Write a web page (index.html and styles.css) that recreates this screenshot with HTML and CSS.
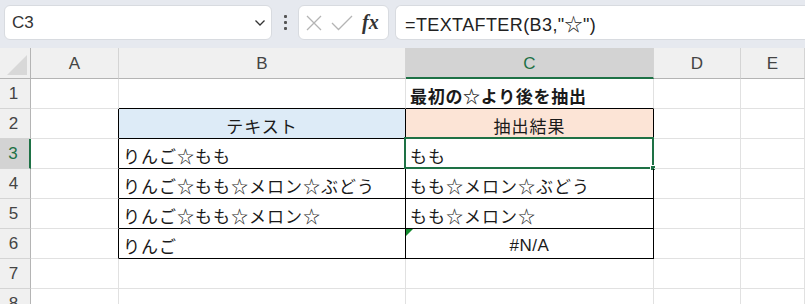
FILE: index.html
```html
<!DOCTYPE html>
<html lang="ja">
<head>
  <meta charset="UTF-8">
  <title>TEXTAFTER</title>
  <link rel="stylesheet" href="styles.css">
</head>
<body>
  <div class="toolbar">
    <div class="name-box">
      <span class="name-text">C3</span>
      <svg class="chevron" width="12" height="8" viewBox="0 0 12 8"><polyline points="1.5,1.5 6,6 10.5,1.5" fill="none" stroke="#333" stroke-width="1.3"/></svg>
    </div>
    <div class="more-dots"><i></i><i></i><i></i></div>
    <div class="fx-box">
      <svg width="18" height="18" viewBox="0 0 18 18"><path d="M2 2 L16 16 M16 2 L2 16" stroke="#b4b4b4" stroke-width="1.3" fill="none"/></svg>
      <svg width="22" height="16" viewBox="0 0 22 16"><polyline points="1,8 7.5,14.5 21,1" stroke="#b4b4b4" stroke-width="1.3" fill="none"/></svg>
      <span class="fx">fx</span>
    </div>
    <div class="formula-box">=TEXTAFTER(B3,"☆")</div>
  </div>

  <div class="sheet">
    <!-- 列見出し -->
    <div class="corner"><span class="corner-tri"></span></div>
    <div class="col-head">A</div>
    <div class="col-head">B</div>
    <div class="col-head sel">C</div>
    <div class="col-head">D</div>
    <div class="col-head">E</div>

    <!-- 1 -->
    <div class="row-head">1</div>
    <div class="cell"></div>
    <div class="cell tb-top"></div>
    <div class="cell tb-top title">最初の☆より後を抽出</div>
    <div class="cell"></div>
    <div class="cell"></div>

    <!-- 2 -->
    <div class="row-head">2</div>
    <div class="cell tb-left"></div>
    <div class="cell tb head-blue">テキスト</div>
    <div class="cell tb head-orange">抽出結果</div>
    <div class="cell"></div>
    <div class="cell"></div>

    <!-- 3 -->
    <div class="row-head sel">3</div>
    <div class="cell tb-left"></div>
    <div class="cell tb">りんご☆もも</div>
    <div class="cell tb active">もも<span class="sel-frame"><span class="fill-handle"></span></span></div>
    <div class="cell"></div>
    <div class="cell"></div>

    <!-- 4 -->
    <div class="row-head">4</div>
    <div class="cell tb-left"></div>
    <div class="cell tb">りんご☆もも☆メロン☆ぶどう</div>
    <div class="cell tb">もも☆メロン☆ぶどう</div>
    <div class="cell"></div>
    <div class="cell"></div>

    <!-- 5 -->
    <div class="row-head">5</div>
    <div class="cell tb-left"></div>
    <div class="cell tb">りんご☆もも☆メロン☆</div>
    <div class="cell tb">もも☆メロン☆</div>
    <div class="cell"></div>
    <div class="cell"></div>

    <!-- 6 -->
    <div class="row-head">6</div>
    <div class="cell tb-left"></div>
    <div class="cell tb">りんご</div>
    <div class="cell tb center err">#N/A<span class="err-tri"></span></div>
    <div class="cell"></div>
    <div class="cell"></div>

    <!-- 7 -->
    <div class="row-head">7</div>
    <div class="cell"></div>
    <div class="cell"></div>
    <div class="cell"></div>
    <div class="cell"></div>
    <div class="cell"></div>

    <!-- 8 -->
    <div class="row-head">8</div>
    <div class="cell"></div>
    <div class="cell"></div>
    <div class="cell"></div>
    <div class="cell"></div>
    <div class="cell"></div>
  </div>
</body>
</html>
```

FILE: styles.css
```css
* {
  box-sizing: border-box;
}

body {
  margin: 0;
  width: 805px;
  height: 304px;
  overflow: hidden;
  background: #ffffff;
  font-family: "Noto Sans CJK JP", "Noto Sans", sans-serif;
  color: #1a1a1a;
}

/* 数式バー */
.toolbar {
  height: 48px;
  background: #e6e9ef;
  display: flex;
  align-items: flex-start;
  padding: 5px 0 0 4px;
}

.name-box {
  width: 268px;
  height: 35px;
  background: #ffffff;
  border: 1px solid #d8dbe0;
  border-radius: 6px;
  display: flex;
  align-items: center;
  justify-content: space-between;
  padding: 0 4px 0 7px;
}

.name-text {
  font-family: "Liberation Sans", "Noto Sans", sans-serif;
  font-size: 17px;
  color: #333333;
}

.chevron {
  margin-right: 1px;
}

.more-dots {
  width: 26px;
  height: 35px;
  display: flex;
  flex-direction: column;
  align-items: center;
  justify-content: center;
  gap: 3px;
}

.more-dots i {
  width: 3px;
  height: 3px;
  background: #555555;
  border-radius: 1px;
}

.fx-box {
  width: 91px;
  height: 35px;
  background: #ffffff;
  border: 1px solid #d8dbe0;
  border-radius: 6px;
  display: flex;
  align-items: center;
  gap: 8px;
  padding: 0 0 0 6px;
}

.fx {
  font-family: "Liberation Serif", serif;
  font-style: italic;
  font-weight: bold;
  font-size: 20px;
  color: #333333;
  margin-left: 1px;
}

.formula-box {
  flex: 1;
  margin-left: 6px;
  height: 35px;
  background: #ffffff;
  border: 1px solid #d8dbe0;
  border-right: none;
  border-radius: 6px 0 0 6px;
  display: flex;
  align-items: center;
  padding-left: 9px;
  font-family: "Liberation Sans", "Noto Sans CJK JP", sans-serif;
  font-size: 18px;
  letter-spacing: 0.4px;
  color: #222222;
}

/* シート */
.sheet {
  display: grid;
  grid-template-columns: 31px 88px 287px 248px 87px 1fr;
  grid-template-rows: 31px repeat(8, 30px);
}

.corner {
  background: #f0f0f0;
  border-right: 1px solid #b4b4b4;
  border-bottom: 1px solid #b4b4b4;
  position: relative;
}

.corner-tri {
  position: absolute;
  right: 3px;
  bottom: 3px;
  width: 0;
  height: 0;
  border-left: 20px solid transparent;
  border-bottom: 20px solid #d8d8d8;
}

.col-head {
  background: #f0f0f0;
  border-right: 1px solid #d4d4d4;
  border-bottom: 1px solid #b4b4b4;
  display: flex;
  align-items: center;
  justify-content: center;
  font-family: "Liberation Sans", sans-serif;
  font-size: 17px;
  color: #444444;
  padding-top: 2px;
}

.col-head.sel {
  background: #d3d3d3;
  border-bottom: 2px solid #1e7145;
  color: #1e7145;
}

.row-head {
  background: #f0f0f0;
  border-right: 1px solid #b4b4b4;
  border-bottom: 1px solid #d4d4d4;
  display: flex;
  align-items: center;
  justify-content: center;
  font-family: "Liberation Sans", sans-serif;
  font-size: 17px;
  color: #444444;
  padding-right: 3px;
}

.row-head.sel {
  background: #d3d3d3;
  border-right: 2px solid #1e7145;
  color: #1e7145;
}

.cell {
  border-right: 1px solid #e1e1e1;
  border-bottom: 1px solid #e1e1e1;
  font-size: 17px;
  letter-spacing: 1px;
  line-height: 29px;
  padding: 2px 0 0 4px;
  white-space: nowrap;
  position: relative;
}

/* 表の罫線 */
.cell.tb-left {
  border-right-color: #000000;
}

.cell.tb-top {
  border-bottom-color: #000000;
}

.cell.tb {
  border-right-color: #000000;
  border-bottom-color: #000000;
}

.title {
  font-weight: bold;
  letter-spacing: 0.7px;
}

.head-blue {
  background: #ddebf7;
  text-align: center;
  padding-left: 0;
}

.head-orange {
  background: #fce4d6;
  text-align: center;
  padding-left: 0;
}

.center {
  text-align: center;
  padding-left: 0;
}

.err {
  font-family: "Liberation Sans", sans-serif;
  letter-spacing: 0.5px;
}

/* 選択セル */
.sel-frame {
  position: absolute;
  left: -2px;
  top: -2px;
  right: -1px;
  bottom: -1px;
  border: 2px solid #1e7145;
}

.fill-handle {
  position: absolute;
  right: -4px;
  bottom: -4px;
  width: 6px;
  height: 6px;
  background: #1e7145;
  border: 1px solid #ffffff;
}

.err-tri {
  position: absolute;
  left: 0;
  top: 0;
  width: 0;
  height: 0;
  border-top: 7px solid #138a2e;
  border-right: 7px solid transparent;
}
```
